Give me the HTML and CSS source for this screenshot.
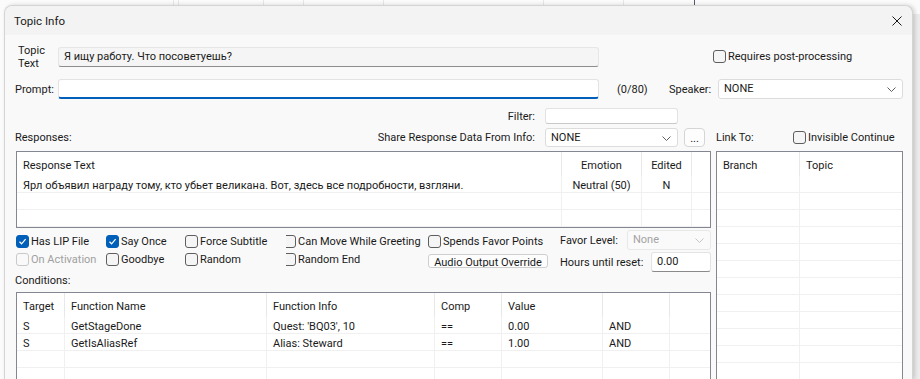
FILE: index.html
```html
<!DOCTYPE html>
<html lang="ru">

<head>
    <meta charset="UTF-8">
    <meta name="viewport" content="width=device-width, initial-scale=1.0">
    <title>Topic Info</title>
    <link rel="stylesheet" href="styles.css">
</head>

<body>
    <div class="window">
        <div class="titlebar">
            <span class="title">Topic Info</span>
            <svg class="close" width="10" height="10" viewBox="0 0 10 10">
                <path d="M0.5 0.5 L9.5 9.5 M9.5 0.5 L0.5 9.5" stroke="#1a1a1a" stroke-width="1" fill="none" />
            </svg>
        </div>

        <div class="content">
            <!-- Topic text -->
            <div class="row row-topic">
                <div class="label label-topic">Topic<br>Text</div>
                <div class="field field-readonly field-main">Я ищу работу. Что посоветуешь?</div>
                <label class="check check-post"><span class="box"></span>Requires post-processing</label>
            </div>

            <!-- Prompt / speaker -->
            <div class="row row-prompt">
                <div class="label">Prompt:</div>
                <div class="field field-focus field-main"></div>
                <span class="counter">(0/80)</span>
                <span class="speaker-label">Speaker:</span>
                <div class="combo combo-speaker">NONE
                    <svg class="chevron" width="9" height="5" viewBox="0 0 9 5"><path d="M0.5 0.5 L4.5 4.5 L8.5 0.5" /></svg>
                </div>
            </div>

            <!-- Filter -->
            <div class="row row-filter">
                <span class="filter-label">Filter:</span>
                <div class="field field-filter"></div>
            </div>

            <div class="split">
                <div class="left">
                    <div class="row row-share">
                        <span class="responses-label">Responses:</span>
                        <span class="share-label">Share Response Data From Info:</span>
                        <div class="combo combo-share">NONE
                            <svg class="chevron" width="9" height="5" viewBox="0 0 9 5"><path d="M0.5 0.5 L4.5 4.5 L8.5 0.5" /></svg>
                        </div>
                        <button class="btn-dots">...</button>
                    </div>

                    <!-- Responses list -->
                    <div class="list list-responses">
                        <div class="lrow lhead">
                            <div class="cell">Response Text</div>
                            <div class="cell center">Emotion</div>
                            <div class="cell center">Edited</div>
                            <div class="cell"></div>
                        </div>
                        <div class="lrow">
                            <div class="cell">Ярл объявил награду тому, кто убьет великана. Вот, здесь все подробности, взгляни.</div>
                            <div class="cell center">Neutral (50)</div>
                            <div class="cell center">N</div>
                            <div class="cell"></div>
                        </div>
                        <div class="lrow">
                            <div class="cell"></div><div class="cell"></div><div class="cell"></div><div class="cell"></div>
                        </div>
                        <div class="lrow">
                            <div class="cell"></div><div class="cell"></div><div class="cell"></div><div class="cell"></div>
                        </div>
                    </div>

                    <!-- Options -->
                    <div class="options">
                        <div class="checks">
                            <label class="check checked"><span class="box"><svg width="11" height="11" viewBox="0 0 11 11"><path d="M2.5 5.8 L4.6 7.8 L8.6 3.2" /></svg></span>Has LIP File</label>
                            <label class="check checked"><span class="box"><svg width="11" height="11" viewBox="0 0 11 11"><path d="M2.5 5.8 L4.6 7.8 L8.6 3.2" /></svg></span>Say Once</label>
                            <label class="check"><span class="box"></span>Force Subtitle</label>
                            <label class="check clipped"><span class="box-wrap"><span class="box"></span></span>Can Move While Greeting</label>
                            <label class="check"><span class="box"></span>Spends Favor Points</label>

                            <label class="check disabled"><span class="box"></span>On Activation</label>
                            <label class="check"><span class="box"></span>Goodbye</label>
                            <label class="check"><span class="box"></span>Random</label>
                            <label class="check clipped"><span class="box-wrap"><span class="box"></span></span>Random End</label>
                            <div class="btn-cell"><button class="btn-audio">Audio Output Override</button></div>
                        </div>
                        <div class="favor">
                            <div class="favor-row">
                                <span>Favor Level:</span>
                                <div class="combo combo-disabled">None
                                    <svg class="chevron" width="9" height="5" viewBox="0 0 9 5"><path d="M0.5 0.5 L4.5 4.5 L8.5 0.5" /></svg>
                                </div>
                            </div>
                            <div class="favor-row">
                                <span>Hours until reset:</span>
                                <div class="field field-hours">0.00</div>
                            </div>
                        </div>
                    </div>

                    <div class="cond-label">Conditions:</div>

                    <!-- Conditions list -->
                    <div class="list list-conditions">
                        <div class="lrow lhead">
                            <div class="cell">Target</div>
                            <div class="cell">Function Name</div>
                            <div class="cell">Function Info</div>
                            <div class="cell">Comp</div>
                            <div class="cell">Value</div>
                            <div class="cell"></div>
                            <div class="cell"></div>
                        </div>
                        <div class="lrow">
                            <div class="cell">S</div>
                            <div class="cell">GetStageDone</div>
                            <div class="cell">Quest: 'BQ03', 10</div>
                            <div class="cell">==</div>
                            <div class="cell">0.00</div>
                            <div class="cell">AND</div>
                            <div class="cell"></div>
                        </div>
                        <div class="lrow">
                            <div class="cell">S</div>
                            <div class="cell">GetIsAliasRef</div>
                            <div class="cell">Alias: Steward</div>
                            <div class="cell">==</div>
                            <div class="cell">1.00</div>
                            <div class="cell">AND</div>
                            <div class="cell"></div>
                        </div>
                        <div class="lrow">
                            <div class="cell"></div><div class="cell"></div><div class="cell"></div><div class="cell"></div><div class="cell"></div><div class="cell"></div><div class="cell"></div>
                        </div>
                        <div class="lrow">
                            <div class="cell"></div><div class="cell"></div><div class="cell"></div><div class="cell"></div><div class="cell"></div><div class="cell"></div><div class="cell"></div>
                        </div>
                    </div>
                </div>

                <div class="right">
                    <div class="row row-link">
                        <span class="link-label">Link To:</span>
                        <label class="check"><span class="box"></span>Invisible Continue</label>
                    </div>

                    <!-- Link To list -->
                    <div class="list list-link" id="linkList">
                        <div class="lrow lhead">
                            <div class="cell">Branch</div>
                            <div class="cell">Topic</div>
                        </div>
                    </div>
                </div>
            </div>
        </div>
    </div>

    <script>
        // Fill the empty Link To list with blank rows
        var linkList = document.getElementById('linkList');
        for (var i = 0; i < 13; i++) {
            var row = document.createElement('div');
            row.className = 'lrow';
            row.innerHTML = '<div class="cell"></div><div class="cell"></div>';
            linkList.appendChild(row);
        }
    </script>
</body>

</html>
```
FILE: styles.css
```css
* {
    box-sizing: border-box;
    margin: 0;
    padding: 0;
}

body {
    height: 379px;
    overflow: hidden;
    font-family: Roboto, "Noto Sans", sans-serif;
    font-size: 11px;
    color: #1a1a1a;
    background-color: #fbfbfb;
    background-image:
        linear-gradient(#e6e6e6, #e6e6e6),
        linear-gradient(#e6e6e6, #e6e6e6),
        linear-gradient(#e6e6e6, #e6e6e6),
        linear-gradient(#e6e6e6, #e6e6e6),
        linear-gradient(#e6e6e6, #e6e6e6),
        linear-gradient(#e6e6e6, #e6e6e6),
        linear-gradient(#e6e6e6, #e6e6e6),
        linear-gradient(#5a5a6a, #5a5a6a),
        linear-gradient(#ececec, #ececec);
    background-size: 1px 6px, 1px 6px, 1px 6px, 1px 6px, 1px 6px, 1px 6px, 1px 6px, 1px 6px, 7px 100%;
    background-position: 173px 0, 178px 0, 263px 0, 303px 0, 383px 0, 543px 0, 623px 0, 694px 0, 913px 14px;
    background-repeat: no-repeat;
}

.window {
    width: 909px;
    height: 374px;
    overflow: hidden;
    margin: 5px 0 0 4px;
    background-color: #f9f9f9;
    border: 1px solid #d4d4d4;
    border-bottom: none;
    border-radius: 8px 8px 0 0;
    box-shadow: 2px 0 4px rgba(0, 0, 0, 0.16);
}

.titlebar {
    height: 29px;
    display: flex;
    align-items: center;
    justify-content: space-between;
    padding: 0 10px 0 9px;
    background-color: #f3f3f3;
    border-radius: 8px 8px 0 0;
}

.title {
    font-size: 11.5px;
    color: #1a1a1a;
}

.content {
    padding: 9px 9px 0 10px;
}

.row {
    display: flex;
    align-items: center;
}

/* ---------- fields ---------- */

.field {
    height: 20px;
    line-height: 18px;
    padding-left: 5px;
    background-color: #fff;
    border: 1px solid #e3e3e3;
    border-bottom-color: #8a8a8a;
    border-radius: 3px;
}

.field-main {
    width: 541px;
}

.field-readonly {
    background-color: #f5f5f5;
    border-color: #e6e6e6;
    border-bottom-color: #8d8d8d;
}

.field-focus {
    border-bottom: 2px solid #005fb8;
}

.combo {
    position: relative;
    height: 20px;
    line-height: 18px;
    padding-left: 5px;
    background-color: #fff;
    border: 1px solid #dcdcdc;
    border-radius: 3px;
}

.chevron {
    position: absolute;
    right: 6px;
    top: 7px;
}

.chevron path {
    stroke: #606060;
    stroke-width: 1;
    fill: none;
}

.combo-disabled {
    width: 84px;
    color: #a3a3a3;
    background-color: #fafafa;
    border-color: #e8e8e8;
}

.combo-disabled .chevron path {
    stroke: #c4c4c4;
}

/* ---------- checkboxes ---------- */

.check {
    display: flex;
    align-items: center;
    height: 18px;
    white-space: nowrap;
}

.box {
    display: block;
    width: 13px;
    height: 13px;
    margin-right: 2px;
    flex-shrink: 0;
    background-color: #f5f5f5;
    border: 1px solid #5e5e5e;
    border-radius: 3px;
}

.checked .box {
    background-color: #005fb8;
    border-color: #005fb8;
}

.box svg {
    display: block;
}

.box svg path {
    stroke: #fff;
    stroke-width: 1.2;
    fill: none;
}

.disabled {
    color: #a0a0a0;
}

.disabled .box {
    background-color: #f9f9f9;
    border-color: #c9c9c9;
}

.box-wrap {
    display: block;
    flex-shrink: 0;
    width: 12px;
    height: 13px;
    overflow: hidden;
}

.box-wrap .box {
    margin-left: -3px;
}

/* ---------- top rows ---------- */

.row-topic {
    height: 26px;
    align-items: flex-start;
}

.label {
    width: 43px;
    flex-shrink: 0;
}

.label-topic {
    padding-left: 3px;
    line-height: 13px;
}

.row-topic .field {
    margin-top: 3px;
}

.check-post {
    margin-left: 114px;
    margin-top: 3px;
}

.row-prompt {
    margin-top: 9px;
    height: 20px;
}

.counter {
    width: 52px;
    margin-left: 18px;
}

.speaker-label {
    width: 49px;
}

.combo-speaker {
    width: 185px;
}

.row-filter {
    margin-top: 9px;
    height: 16px;
}

.filter-label {
    width: 520px;
    text-align: right;
    margin-right: 10px;
}

.field-filter {
    width: 133px;
    height: 16px;
    border-bottom-color: #c8c8c8;
}

/* ---------- split ---------- */

.split {
    display: flex;
    gap: 5px;
    margin-top: 3px;
}

.left {
    width: 696px;
}

.right {
    width: 187px;
}

.row-share,
.row-link {
    height: 20px;
}

.responses-label {
    flex: 1;
}

.share-label {
    margin-right: 10px;
}

.combo-share {
    width: 133px;
    height: 19px;
    line-height: 17px;
}

.btn-dots {
    width: 21px;
    height: 19px;
    margin: 0 6px 0 6px;
    font-family: inherit;
    font-size: 11px;
    line-height: 19px;
    color: #1a1a1a;
    background-color: #fdfdfd;
    border: 1px solid #d5d5d5;
    border-radius: 4px;
}

.link-label {
    width: 77px;
}

/* ---------- lists ---------- */

.list {
    margin-top: 4px;
    background-color: #fff;
    border: 1px solid #848692;
    overflow: hidden;
}

.list-responses {
    margin-left: 1px;
    height: 77px;
}

.list-conditions {
    margin-left: 1px;
    margin-top: 4px;
    height: 100px;
    border-bottom: none;
}

.list-link {
    height: 240px;
    border-bottom: none;
}

.lrow {
    display: grid;
    height: 17px;
}

.lrow .cell {
    padding: 3px 0 0 6px;
    line-height: 14px;
    white-space: nowrap;
    overflow: hidden;
    border-right: 1px solid #f0f0f0;
    border-bottom: 1px solid #f0f0f0;
}

.lrow.lhead {
    height: 24px;
}

.lhead .cell {
    padding-top: 3px;
    line-height: 21px;
    border-bottom: none;
    border-right-color: #e8e8e8;
}

.lrow .center {
    padding-left: 0;
    text-align: center;
}

.list-responses .lrow {
    grid-template-columns: 545px 80px 50px 1fr;
}

.list-conditions .lrow {
    grid-template-columns: 48px 202px 168px 67px 101px 67px 1fr;
}

.list-link .lrow {
    grid-template-columns: 83px 1fr;
}

.lrow .cell:last-child {
    border-right: none;
}

/* ---------- options ---------- */

.options {
    display: flex;
    align-items: flex-start;
    height: 46px;
}

.checks {
    display: grid;
    grid-template-columns: 90px 79px 101px 142px 132px;
    grid-auto-rows: 18px;
    margin: 4px 0 0 1px;
}

.btn-cell {
    padding-top: 4px;
}

.btn-audio {
    display: block;
    width: 120px;
    height: 14px;
    overflow: hidden;
    font-family: inherit;
    font-size: 11px;
    line-height: 15px;
    color: #1a1a1a;
    background-color: #fdfdfd;
    border: 1px solid #cfcfcf;
    border-radius: 3px;
}

.favor {
    width: 151px;
    margin-top: 2px;
    display: flex;
    flex-direction: column;
    gap: 2px;
}

.favor-row {
    display: flex;
    align-items: center;
    justify-content: space-between;
    height: 20px;
}

.field-hours {
    width: 60px;
}

.cond-label {
    line-height: 14px;
}
```
